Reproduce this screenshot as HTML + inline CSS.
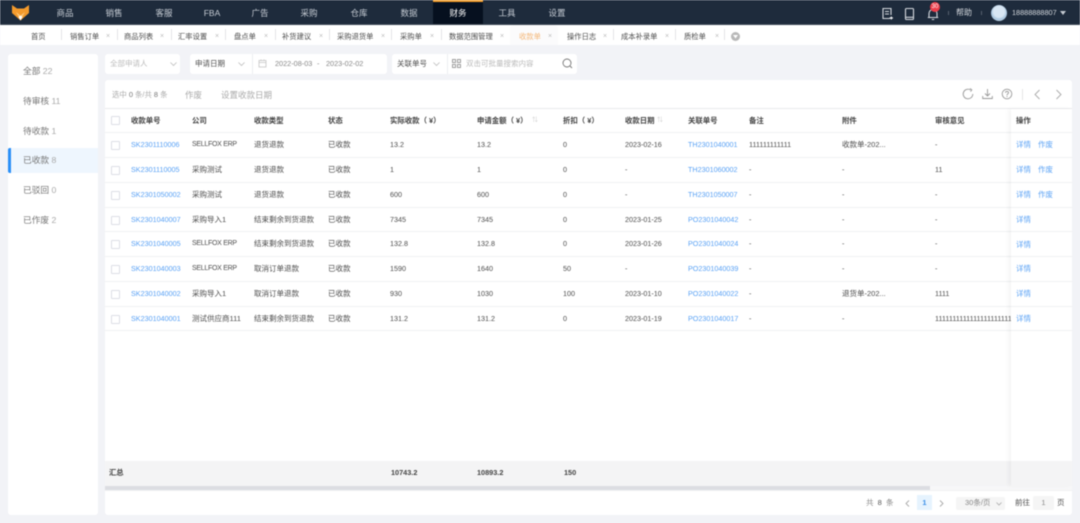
<!DOCTYPE html>
<html lang="zh"><head><meta charset="utf-8"><title>收款单</title>
<style>
*{box-sizing:border-box}
html,body{margin:0;padding:0;width:1080px;height:523px;overflow:hidden;background:#f2f3f7}
body{font-family:"Liberation Sans","Noto Sans CJK SC",sans-serif;font-size:7.5px;color:#555}
#w{position:relative;width:1080px;height:523px;overflow:hidden;filter:blur(.4px)}
#w div,#w span,#w svg{position:absolute}
.l{white-space:nowrap;line-height:12px}
.nav{top:0;left:0;width:1080px;height:25px;background:#1e2b3c}
.n{top:7px;width:40px;text-align:center;color:#c6ccd4;font-size:8.5px;line-height:12px}
.tabs{top:25px;left:0;width:1080px;height:20px;background:#fff;box-shadow:0 -1px 0 #3d4855}
.t{top:3px;font-size:7.3px;line-height:12px;color:#4d4d4d;white-space:nowrap}
.x{top:3px;font-size:7px;line-height:12px;color:#bbb}
.s{top:4px;width:1px;height:11px;background:#e3e4e7}
.box{background:#fff;border-radius:3px}
.side{font-size:8.7px;left:23px;color:#777;white-space:nowrap;line-height:12px}
.side i{font-style:normal;color:#aaa}
.r{left:105px;width:967px;height:1px;background:#f0f1f3}
.c{white-space:nowrap;line-height:12px;color:#4d4d4d;font-size:7.2px}
.z{font-size:7.5px}
.y{font-size:7px;letter-spacing:-.28px}
.h{top:115px;font-weight:700;color:#444;white-space:nowrap;line-height:12px;font-size:7.4px}
.a{color:#5aa2f5}
.cb{left:111px;width:9px;height:9px;border:1px solid #dcdfe6;border-radius:1px;background:#fff}
.sum{top:467px;font-weight:700;color:#444;line-height:12px;white-space:nowrap;font-size:7.3px}
.f{color:#888;font-size:7.5px;line-height:12px;white-space:nowrap}
</style></head><body><div id="w">

<div class="nav"></div>
<svg style="left:12px;top:5px" width="17" height="16" viewBox="0 0 17 16"><path d="M0 0L5 3.5H12L17 0V8L8.500 15.500L0 8Z" fill="#f49a2c"/><path d="M4 7L8.500 10.500L13 7L8.500 15L4 7Z" fill="#fbc67c"/><path d="M6.500 12L8.500 10.500L10.500 12L8.500 15.500Z" fill="#fff"/></svg>
<span class="n" style="left:45px">商品</span>
<span class="n" style="left:94px">销售</span>
<span class="n" style="left:144px">客服</span>
<span class="n" style="left:192px">FBA</span>
<span class="n" style="left:240px">广告</span>
<span class="n" style="left:289px">采购</span>
<span class="n" style="left:339px">仓库</span>
<span class="n" style="left:389px">数据</span>
<div style="left:433px;top:0;width:50px;height:25px;background:#06101f"></div>
<div style="left:433px;top:0;width:50px;height:2px;background:#f5a02f"></div>
<span class="n" style="left:438px;color:#fff">财务</span>
<span class="n" style="left:487px">工具</span>
<span class="n" style="left:537px">设置</span>
<svg style="left:881px;top:7px" width="13" height="14" viewBox="0 0 13 14" fill="none" stroke="#d5d9de" stroke-width="1.100"><path d="M9 11.500H2V1.500H10V8"/><path d="M4 4.500H8M4 7H8"/><path d="M8.500 11H12M10.300 9.500V12.500" stroke="#fff"/></svg>
<svg style="left:904px;top:7px" width="11" height="14" viewBox="0 0 11 14" fill="none" stroke="#d5d9de" stroke-width="1.100"><rect x="1.500" y="1.500" width="8" height="11" rx="1"/><path d="M1.500 10.300H9.500"/></svg>
<svg style="left:927px;top:8px" width="12" height="13" viewBox="0 0 12 13" fill="none" stroke="#d5d9de" stroke-width="1.100"><path d="M2 9.500V5.500C2 3.200 3.700 1.500 6 1.500S10 3.200 10 5.500V9.500ZM.8 9.500H11.200M4.800 11.500H7.200"/></svg>
<div style="left:930px;top:2px;width:10px;height:10px;border-radius:5px;background:#ee3d4a"></div>
<span class="l" style="left:930px;top:1px;width:10px;text-align:center;font-size:6px;color:#fff">30</span>
<div style="left:948px;top:11px;width:1px;height:4px;background:#56616f"></div>
<span class="l" style="left:956px;top:7px;color:#d5d9de;font-size:8px">帮助</span>
<div style="left:981px;top:11px;width:1px;height:4px;background:#56616f"></div>
<div style="left:991px;top:5px;width:16px;height:16px;border-radius:8px;background:radial-gradient(circle at 50% 42%,#d8e6f3 0 45%,#a9c6df 62%,#e8eef3 100%)"></div>
<span class="l" style="left:1012px;top:7px;color:#d5d9de;font-size:7.300px">18888888807</span>
<svg style="left:1060px;top:11px" width="6" height="4" viewBox="0 0 6 4"><path d="M0 0H6L3 4Z" fill="#c4cad1"/></svg>

<div class="tabs"></div>
<div style="left:510px;top:25px;width:48px;height:20px;background:#fbfbfc;border-radius:4px 4px 0 0"></div>
<span class="t" style="left:31px;top:31px">首页</span>
<div class="s" style="left:61px;top:29px"></div>
<span class="t" style="left:70px;top:31px">销售订单</span><span class="x" style="left:106px;top:31px">×</span>
<div class="s" style="left:117px;top:29px"></div>
<span class="t" style="left:124px;top:31px">商品列表</span><span class="x" style="left:160px;top:31px">×</span>
<div class="s" style="left:171px;top:29px"></div>
<span class="t" style="left:178px;top:31px">汇率设置</span><span class="x" style="left:215px;top:31px">×</span>
<div class="s" style="left:225px;top:29px"></div>
<span class="t" style="left:234px;top:31px">盘点单</span><span class="x" style="left:264px;top:31px">×</span>
<div class="s" style="left:275px;top:29px"></div>
<span class="t" style="left:282px;top:31px">补货建议</span><span class="x" style="left:319px;top:31px">×</span>
<div class="s" style="left:329px;top:29px"></div>
<span class="t" style="left:337px;top:31px">采购退货单</span><span class="x" style="left:381px;top:31px">×</span>
<div class="s" style="left:391px;top:29px"></div>
<span class="t" style="left:400px;top:31px">采购单</span><span class="x" style="left:430px;top:31px">×</span>
<div class="s" style="left:441px;top:29px"></div>
<span class="t" style="left:449px;top:31px">数据范围管理</span><span class="x" style="left:500px;top:31px">×</span>
<span class="t" style="left:519px;top:31px;color:#f4b778">收款单</span><span class="x" style="left:548px;top:31px">×</span>
<span class="t" style="left:567px;top:31px">操作日志</span><span class="x" style="left:603px;top:31px">×</span>
<div class="s" style="left:613px;top:29px"></div>
<span class="t" style="left:621px;top:31px">成本补录单</span><span class="x" style="left:665px;top:31px">×</span>
<div class="s" style="left:675px;top:29px"></div>
<span class="t" style="left:684px;top:31px">质检单</span><span class="x" style="left:715px;top:31px">×</span>
<div class="s" style="left:724px;top:29px"></div>
<div style="left:731px;top:32px;width:9px;height:9px;border-radius:5px;background:#b8b8b8"></div>
<svg style="left:733px;top:35px" width="5" height="4" viewBox="0 0 5 4"><path d="M0 0H5L2.500 3.500Z" fill="#fff"/></svg>

<div class="box" style="left:8px;top:54px;width:90px;height:461px"></div>
<div class="side" style="top:65px">全部 <i>22</i></div>
<div class="side" style="top:95px">待审核 <i>11</i></div>
<div class="side" style="top:125px">待收款 <i>1</i></div>
<div style="left:8px;top:148px;width:90px;height:25px;background:#eef6fe"></div>
<div style="left:8px;top:148px;width:3px;height:25px;background:#2a8ff7;border-radius:2px 0 0 2px"></div>
<div class="side" style="top:154px">已收款 <i>8</i></div>
<div class="side" style="top:184px">已驳回 <i>0</i></div>
<div class="side" style="top:214px">已作废 <i>2</i></div>

<div class="box" style="left:105px;top:54px;width:75px;height:20px"></div>
<span class="l" style="left:110px;top:58px;color:#bbb">全部申请人</span>
<svg style="left:170px;top:62px" width="7" height="4" viewBox="0 0 7 4" fill="none" stroke="#bbb" stroke-width=".8"><path d="M.5 .5L3.500 3.500L6.500 .5"/></svg>
<div class="box" style="left:190px;top:54px;width:197px;height:20px"></div>
<div style="left:252px;top:54px;width:1px;height:20px;background:#eceef2"></div>
<span class="l" style="left:195px;top:58px;color:#4d4d4d">申请日期</span>
<svg style="left:238px;top:62px" width="7" height="4" viewBox="0 0 7 4" fill="none" stroke="#bbb" stroke-width=".8"><path d="M.5 .5L3.500 3.500L6.500 .5"/></svg>
<svg style="left:258px;top:59px" width="9" height="9" viewBox="0 0 9 9" fill="none" stroke="#c5c5c5" stroke-width=".8"><rect x="1" y="1.500" width="7" height="6.500"/><path d="M1 3.500H8M3 .5V2M6 .5V2"/></svg>
<span class="l" style="left:275px;top:58px;color:#888;font-size:7.300px">2022-08-03</span>
<span class="l" style="left:317px;top:58px;color:#888;font-size:7.300px">-</span>
<span class="l" style="left:326px;top:58px;color:#888;font-size:7.300px">2023-02-02</span>
<div class="box" style="left:392px;top:54px;width:185px;height:20px"></div>
<div style="left:447px;top:54px;width:1px;height:20px;background:#eceef2"></div>
<span class="l" style="left:397px;top:58px;color:#4d4d4d">关联单号</span>
<svg style="left:433px;top:62px" width="7" height="4" viewBox="0 0 7 4" fill="none" stroke="#bbb" stroke-width=".8"><path d="M.5 .5L3.500 3.500L6.500 .5"/></svg>
<svg style="left:452px;top:59px" width="9" height="10" viewBox="0 0 9 10" fill="none" stroke="#888" stroke-width=".8"><rect x=".5" y=".5" width="3" height="3"/><rect x="5.500" y=".5" width="3" height="3"/><rect x=".5" y="5.500" width="3" height="3"/><rect x="5.500" y="5.500" width="3" height="3"/></svg>
<span class="l" style="left:466px;top:58px;color:#bbb">双击可批量搜索内容</span>
<svg style="left:562px;top:58px" width="11" height="11" viewBox="0 0 11 11" fill="none" stroke="#777" stroke-width=".9"><circle cx="5" cy="5" r="4"/><path d="M8 8L10 10"/></svg>

<div class="box" style="left:105px;top:80px;width:967px;height:435px"></div>
<span class="l" style="left:112px;top:89px;color:#aaa;font-size:7.400px">选中 <b style="color:#777;font-weight:400">0</b> 条/共 <b style="color:#777;font-weight:400">8</b> 条</span>
<span class="l" style="left:185px;top:89px;color:#aaa;font-size:8.500px">作废</span>
<span class="l" style="left:221px;top:89px;color:#aaa;font-size:8.500px">设置收款日期</span>
<svg style="left:962px;top:88px" width="12" height="12" viewBox="0 0 12 12" fill="none" stroke="#999" stroke-width=".9"><path d="M10.800 6A4.800 4.800 0 1 1 8.500 1.900"/><path d="M8 .5L9.800 1.800L8.500 3.600"/></svg>
<svg style="left:982px;top:88px" width="11" height="12" viewBox="0 0 11 12" fill="none" stroke="#999" stroke-width=".9"><path d="M5.500 1V8M3 5.500L5.500 8L8 5.500M.7 8V10.500H10.300V8"/></svg>
<svg style="left:1001px;top:88px" width="12" height="12" viewBox="0 0 12 12" fill="none" stroke="#999" stroke-width=".9"><circle cx="6" cy="6" r="4.800"/><path d="M4.500 4.700C4.500 3 7.500 3 7.500 4.700C7.500 5.900 6 5.800 6 7.200M6 8V9"/></svg>
<div style="left:1022px;top:89px;width:1px;height:11px;background:#e6e6e6"></div>
<svg style="left:1034px;top:89px" width="7" height="11" viewBox="0 0 7 11" fill="none" stroke="#aaa" stroke-width=".9"><path d="M5.500 1L1 5.500L5.500 10"/></svg>
<svg style="left:1055px;top:89px" width="7" height="11" viewBox="0 0 7 11" fill="none" stroke="#aaa" stroke-width=".9"><path d="M1.500 1L6 5.500L1.500 10"/></svg>

<div class="r" style="top:108px;background:#e9eaec"></div>
<div class="r" style="top:132px"></div>
<div class="r" style="top:157px"></div>
<div class="r" style="top:182px"></div>
<div class="r" style="top:207px"></div>
<div class="r" style="top:231px"></div>
<div class="r" style="top:256px"></div>
<div class="r" style="top:281px"></div>
<div class="r" style="top:306px"></div>
<div class="r" style="top:330px"></div>

<div class="cb" style="top:116px"></div>
<span class="h" style="left:131px">收款单号</span>
<span class="h" style="left:192px">公司</span>
<span class="h" style="left:254px">收款类型</span>
<span class="h" style="left:328px">状态</span>
<span class="h" style="left:390px">实际收款（&nbsp;¥）</span>
<span class="h" style="left:477px">申请金额（&nbsp;¥）</span>
<span class="l" style="left:532px;top:115px;color:#ccc;font-size:6px">⇅</span>
<span class="h" style="left:563px">折扣（&nbsp;¥）</span>
<span class="h" style="left:625px">收款日期</span>
<span class="l" style="left:657px;top:115px;color:#ccc;font-size:6px">⇅</span>
<span class="h" style="left:688px">关联单号</span>
<span class="h" style="left:749px">备注</span>
<span class="h" style="left:842px">附件</span>
<span class="h" style="left:935px">审核意见</span>

<div class="cb" style="top:141px"></div>
<span class="c a" style="left:131px;top:139px">SK2301110006</span><span class="c y" style="left:192px;top:139px">SELLFOX ERP</span><span class="c z" style="left:254px;top:139px">退货退款</span><span class="c z" style="left:328px;top:139px">已收款</span><span class="c" style="left:390px;top:139px">13.2</span><span class="c" style="left:477px;top:139px">13.2</span><span class="c" style="left:563px;top:139px">0</span><span class="c" style="left:625px;top:139px">2023-02-16</span><span class="c a" style="left:688px;top:139px">TH2301040001</span><span class="c" style="left:749px;top:139px">111111111111</span><span class="c z" style="left:842px;top:139px">收款单-202...</span><span class="c" style="left:935px;top:139px">-</span>

<div class="cb" style="top:166px"></div>
<span class="c a" style="left:131px;top:164px">SK2301110005</span><span class="c z" style="left:192px;top:164px">采购测试</span><span class="c z" style="left:254px;top:164px">退货退款</span><span class="c z" style="left:328px;top:164px">已收款</span><span class="c" style="left:390px;top:164px">1</span><span class="c" style="left:477px;top:164px">1</span><span class="c" style="left:563px;top:164px">0</span><span class="c" style="left:625px;top:164px">-</span><span class="c a" style="left:688px;top:164px">TH2301060002</span><span class="c" style="left:749px;top:164px">-</span><span class="c" style="left:842px;top:164px">-</span><span class="c" style="left:935px;top:164px">11</span>

<div class="cb" style="top:191px"></div>
<span class="c a" style="left:131px;top:189px">SK2301050002</span><span class="c z" style="left:192px;top:189px">采购测试</span><span class="c z" style="left:254px;top:189px">退货退款</span><span class="c z" style="left:328px;top:189px">已收款</span><span class="c" style="left:390px;top:189px">600</span><span class="c" style="left:477px;top:189px">600</span><span class="c" style="left:563px;top:189px">0</span><span class="c" style="left:625px;top:189px">-</span><span class="c a" style="left:688px;top:189px">TH2301050007</span><span class="c" style="left:749px;top:189px">-</span><span class="c" style="left:842px;top:189px">-</span><span class="c" style="left:935px;top:189px">-</span>

<div class="cb" style="top:216px"></div>
<span class="c a" style="left:131px;top:214px">SK2301040007</span><span class="c z" style="left:192px;top:214px">采购导入1</span><span class="c z" style="left:254px;top:214px">结束剩余到货退款</span><span class="c z" style="left:328px;top:214px">已收款</span><span class="c" style="left:390px;top:214px">7345</span><span class="c" style="left:477px;top:214px">7345</span><span class="c" style="left:563px;top:214px">0</span><span class="c" style="left:625px;top:214px">2023-01-25</span><span class="c a" style="left:688px;top:214px">PO2301040042</span><span class="c" style="left:749px;top:214px">-</span><span class="c" style="left:842px;top:214px">-</span><span class="c" style="left:935px;top:214px">-</span>

<div class="cb" style="top:240px"></div>
<span class="c a" style="left:131px;top:238px">SK2301040005</span><span class="c y" style="left:192px;top:238px">SELLFOX ERP</span><span class="c z" style="left:254px;top:238px">结束剩余到货退款</span><span class="c z" style="left:328px;top:238px">已收款</span><span class="c" style="left:390px;top:238px">132.8</span><span class="c" style="left:477px;top:238px">132.8</span><span class="c" style="left:563px;top:238px">0</span><span class="c" style="left:625px;top:238px">2023-01-26</span><span class="c a" style="left:688px;top:238px">PO2301040024</span><span class="c" style="left:749px;top:238px">-</span><span class="c" style="left:842px;top:238px">-</span><span class="c" style="left:935px;top:238px">-</span>

<div class="cb" style="top:265px"></div>
<span class="c a" style="left:131px;top:263px">SK2301040003</span><span class="c y" style="left:192px;top:263px">SELLFOX ERP</span><span class="c z" style="left:254px;top:263px">取消订单退款</span><span class="c z" style="left:328px;top:263px">已收款</span><span class="c" style="left:390px;top:263px">1590</span><span class="c" style="left:477px;top:263px">1640</span><span class="c" style="left:563px;top:263px">50</span><span class="c" style="left:625px;top:263px">-</span><span class="c a" style="left:688px;top:263px">PO2301040039</span><span class="c" style="left:749px;top:263px">-</span><span class="c" style="left:842px;top:263px">-</span><span class="c" style="left:935px;top:263px">-</span>

<div class="cb" style="top:290px"></div>
<span class="c a" style="left:131px;top:288px">SK2301040002</span><span class="c z" style="left:192px;top:288px">采购导入1</span><span class="c z" style="left:254px;top:288px">取消订单退款</span><span class="c z" style="left:328px;top:288px">已收款</span><span class="c" style="left:390px;top:288px">930</span><span class="c" style="left:477px;top:288px">1030</span><span class="c" style="left:563px;top:288px">100</span><span class="c" style="left:625px;top:288px">2023-01-10</span><span class="c a" style="left:688px;top:288px">PO2301040022</span><span class="c" style="left:749px;top:288px">-</span><span class="c z" style="left:842px;top:288px">退货单-202...</span><span class="c" style="left:935px;top:288px">1111</span>

<div class="cb" style="top:315px"></div>
<span class="c a" style="left:131px;top:313px">SK2301040001</span><span class="c z" style="left:192px;top:313px">测试供应商111</span><span class="c z" style="left:254px;top:313px">结束剩余到货退款</span><span class="c z" style="left:328px;top:313px">已收款</span><span class="c" style="left:390px;top:313px">131.2</span><span class="c" style="left:477px;top:313px">131.2</span><span class="c" style="left:563px;top:313px">0</span><span class="c" style="left:625px;top:313px">2023-01-19</span><span class="c a" style="left:688px;top:313px">PO2301040017</span><span class="c" style="left:749px;top:313px">-</span><span class="c" style="left:842px;top:313px">-</span><span class="c" style="left:935px;top:313px">1111111111111111111111111</span>

<div style="left:105px;top:461px;width:967px;height:25px;background:#f4f4f5"></div>
<div style="left:105px;top:486px;width:967px;height:4px;background:#f7f7f8"></div>
<div style="left:105px;top:486px;width:825px;height:4px;background:#dcdde2"></div>
<span class="sum" style="left:109px">汇总</span>
<span class="sum" style="left:391px">10743.2</span>
<span class="sum" style="left:477px">10893.2</span>
<span class="sum" style="left:564px">150</span>

<div style="left:1011px;top:109px;width:61px;height:377px;background:#fff;box-shadow:-3px 0 4px rgba(0,0,0,.04)"></div>
<div style="left:1011px;top:132px;width:61px;height:1px;background:#f0f1f3"></div>
<div style="left:1011px;top:157px;width:61px;height:1px;background:#f0f1f3"></div>
<div style="left:1011px;top:182px;width:61px;height:1px;background:#f0f1f3"></div>
<div style="left:1011px;top:207px;width:61px;height:1px;background:#f0f1f3"></div>
<div style="left:1011px;top:231px;width:61px;height:1px;background:#f0f1f3"></div>
<div style="left:1011px;top:256px;width:61px;height:1px;background:#f0f1f3"></div>
<div style="left:1011px;top:281px;width:61px;height:1px;background:#f0f1f3"></div>
<div style="left:1011px;top:306px;width:61px;height:1px;background:#f0f1f3"></div>
<div style="left:1011px;top:330px;width:61px;height:1px;background:#f0f1f3"></div>
<div style="left:1011px;top:461px;width:61px;height:25px;background:#f4f4f5"></div>
<span class="h" style="left:1016px">操作</span>
<span class="c z a" style="left:1016px;top:139px">详情</span><span class="c z a" style="left:1038px;top:139px">作废</span>
<span class="c z a" style="left:1016px;top:164px">详情</span><span class="c z a" style="left:1038px;top:164px">作废</span>
<span class="c z a" style="left:1016px;top:189px">详情</span><span class="c z a" style="left:1038px;top:189px">作废</span>
<span class="c z a" style="left:1016px;top:214px">详情</span>
<span class="c z a" style="left:1016px;top:239px">详情</span>
<span class="c z a" style="left:1016px;top:263px">详情</span>
<span class="c z a" style="left:1016px;top:288px">详情</span>
<span class="c z a" style="left:1016px;top:313px">详情</span>

<div style="left:105px;top:490px;width:967px;height:1px;background:#f0f1f3"></div>
<span class="f" style="left:866px;top:497px">共&nbsp; <b style="color:#555;font-weight:400">8</b> &nbsp;条</span>
<svg style="left:905px;top:500px" width="5" height="7" viewBox="0 0 5 7" fill="none" stroke="#aaa" stroke-width=".9"><path d="M4 .5L1 3.500L4 6.500"/></svg>
<div style="left:917px;top:495px;width:15px;height:15px;background:#e6f3fe"></div>
<span class="l" style="left:917px;top:497px;width:15px;text-align:center;color:#3a8fe8;font-weight:700">1</span>
<svg style="left:939px;top:500px" width="5" height="7" viewBox="0 0 5 7" fill="none" stroke="#aaa" stroke-width=".9"><path d="M1 .5L4 3.500L1 6.500"/></svg>
<div style="left:956px;top:497px;width:49px;height:13px;background:#f5f5f5;border-radius:2px"></div>
<span class="f" style="left:965px;top:497px">30条/页</span>
<svg style="left:996px;top:502px" width="6" height="4" viewBox="0 0 6 4" fill="none" stroke="#aaa" stroke-width=".8"><path d="M.5 .5L3 3L5.500 .5"/></svg>
<span class="f" style="left:1015px;top:497px;color:#4d4d4d">前往</span>
<div style="left:1033px;top:496px;width:21px;height:14px;background:#f5f5f5;border-radius:2px"></div>
<span class="f" style="left:1033px;top:497px;width:21px;text-align:center">1</span>
<span class="f" style="left:1057px;top:497px;color:#4d4d4d">页</span>

</div></body></html>
